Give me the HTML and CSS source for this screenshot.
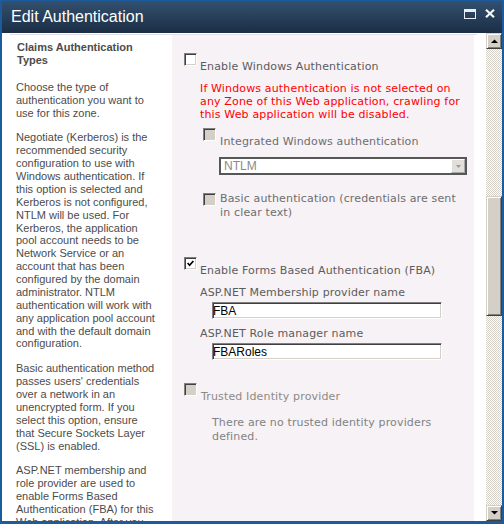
FILE: index.html
```html
<!DOCTYPE html>
<html lang="en">
<head>
<meta charset="utf-8">
<title>Edit Authentication</title>
<link rel="stylesheet" href="styles.css">
</head>
<body>
<div class="window">
  <div class="titlebar">
    <span class="title">Edit Authentication</span>
    <span class="tb-icons">
      <svg class="ic-max" width="12" height="10" viewBox="0 0 12 10"><rect x="0.5" y="0.5" width="11" height="9" fill="none" stroke="#e8eef4"/><rect x="0" y="0" width="12" height="3" fill="#e8eef4"/></svg>
      <svg class="ic-close" width="10" height="9" viewBox="0 0 10 9"><path d="M1 0.8 L9 8.2 M9 0.8 L1 8.2" stroke="#f4f6f8" stroke-width="2.2" fill="none"/></svg>
    </span>
  </div>
  <div class="body">
    <div class="viewport">
      <div class="section">
        <div class="desc">
          <h3>Claims Authentication Types</h3>
          <p>Choose the type of authentication you want to use for this zone.</p>
          <p>Negotiate (Kerberos) is the recommended security configuration to use with Windows authentication. If this option is selected and Kerberos is not configured, NTLM will be used. For Kerberos, the application pool account needs to be Network Service or an account that has been configured by the domain administrator. NTLM authentication will work with any application pool account and with the default domain configuration.</p>
          <p>Basic authentication method passes users' credentials over a network in an unencrypted form. If you select this option, ensure that Secure Sockets Layer (SSL) is enabled.</p>
          <p>ASP.NET membership and role provider are used to enable Forms Based Authentication (FBA) for this Web application. After you select this option, make sure that the provider names are configured in the web.config file.</p>
        </div>
        <div class="controls">
          <div class="cb-row">
            <span class="cb"></span>
            <span class="cb-label">Enable Windows Authentication</span>
          </div>
          <p class="warn">If Windows authentication is not selected on any Zone of this Web application, crawling for this Web application will be disabled.</p>
          <div class="sub">
            <div class="cb-row sub-int">
              <span class="cb disabled"></span>
              <span class="cb-label dim">Integrated Windows authentication</span>
            </div>
            <div class="select">
              <span class="sel-text">NTLM</span>
              <span class="sel-btn"><svg width="5" height="3" viewBox="0 0 5 3"><path d="M0 0 H5 L2.5 3 Z" fill="#9a9a9a"/></svg></span>
            </div>
            <div class="cb-row sub-basic">
              <span class="cb disabled"></span>
              <span class="cb-label dim wrap">Basic authentication (credentials are sent in clear text)</span>
            </div>
          </div>
          <div class="cb-row fba">
            <span class="cb"><svg width="7" height="7" viewBox="0 0 7 7"><path d="M0.6 3 L2.6 5.2 L6.4 1" fill="none" stroke="#000" stroke-width="1.7"/></svg></span>
            <span class="cb-label">Enable Forms Based Authentication (FBA)</span>
          </div>
          <div class="field-label">ASP.NET Membership provider name</div>
          <input class="tb" type="text" value="FBA">
          <div class="field-label second">ASP.NET Role manager name</div>
          <input class="tb" type="text" value="FBARoles">
          <div class="cb-row trusted">
            <span class="cb disabled"></span>
            <span class="cb-label faint">Trusted Identity provider</span>
          </div>
          <p class="note">There are no trusted identity providers defined.</p>
        </div>
      </div>
    </div>
    <div class="scrollbar">
      <div class="sb-btn"><svg width="7" height="4" viewBox="0 0 7 4"><path d="M0 4 H7 L3.5 0.5 Z" fill="#000"/></svg></div>
      <div class="sb-track"><div class="sb-thumb"></div></div>
      <div class="sb-btn"><svg width="7" height="4" viewBox="0 0 7 4"><path d="M0 0 H7 L3.5 3.5 Z" fill="#000"/></svg></div>
    </div>
  </div>
</div>
</body>
</html>
```
FILE: styles.css
```css
* { box-sizing: border-box; }
html, body { margin: 0; padding: 0; }
body { width: 504px; height: 524px; overflow: hidden; background: #fff; }

.window {
  width: 504px;
  height: 524px;
  border: 2px solid #1a5c9e;
  border-top-width: 1px;
  border-bottom-width: 3px;
  display: flex;
  flex-direction: column;
}

.titlebar {
  height: 32px;
  flex: none;
  background: linear-gradient(#33506f, #1b2e45);
  display: flex;
  align-items: center;
  padding: 0 7px 0 9px;
}
.title {
  font: 16px "Liberation Sans", Arial, sans-serif;
  color: #fff;
}
.tb-icons {
  margin-left: auto;
  align-self: flex-start;
  margin-top: 8px;
  display: flex;
  gap: 9px;
}
.tb-icons svg { display: block; }

.body { flex: 1; display: flex; min-height: 0; }
.viewport {
  flex: 1;
  overflow: hidden;
  padding: 1px 9px 0 8px;
}
.section {
  display: flex;
  width: 467px;
  border-top: 1px solid #e3dee3;
}

.desc {
  width: 162px;
  flex: none;
  padding: 6px 16px 0 6px;
  font: 11px/12.875px "Liberation Sans", Arial, sans-serif;
  color: #4c4c4c;
}
.desc h3 {
  margin: 0;
  padding-left: 1px;
  font-size: 11px;
  font-weight: bold;
}
.desc p { margin: 12px 0 0; }
.desc h3 + p { margin-top: 14px; }

.controls {
  width: 302px;
  flex: none;
  background: #f6f2f6;
  padding: 18px 8px 0 12px;
  font: 11px/13px "DejaVu Sans", Verdana, sans-serif;
  letter-spacing: 0.15px;
  color: #5c5c5c;
}
.controls p { margin: 0; }

.cb-row { display: flex; align-items: flex-start; }
.cb {
  width: 13px;
  height: 13px;
  flex: none;
  background: #fff;
  border: 1px solid;
  border-color: #808080 #fff #fff #808080;
  box-shadow: inset 1px 1px #404040, inset -1px -1px #d4d0c8;
  display: flex;
  align-items: center;
  justify-content: center;
}
.cb svg { display: block; }
.cb.disabled { background: #d4d0c8; }
.cb-label { margin: 7px 0 0 3px; }
.dim { color: #6e6e6e; }
.faint { color: #8e8a84; }

.warn {
  margin: 9px 0 0 16px !important;
  width: 268px;
  color: #f00;
}

.sub { margin-left: 19px; }
.sub .cb-label { margin-left: 4px; }
.sub-int { margin-top: 7px; }
.sub-basic { margin-top: 18px; }
.sub-basic .cb-label { margin-top: -1px; line-height: 14px; }

.select {
  margin: 9px 0 0 16px;
  width: 248px;
  height: 18px;
  border: 2px solid #575757;
  background: #fff;
  display: flex;
  align-items: center;
  padding-left: 3px;
  font: 12px "Liberation Sans", Arial, sans-serif;
  letter-spacing: 0;
  color: #8a8a8a;
}
.sel-btn {
  margin-left: auto;
  width: 14px;
  height: 14px;
  background: #e2dfda;
  border: 1px solid;
  border-color: #fff #a8a8a8 #a8a8a8 #fff;
  display: flex;
  align-items: center;
  justify-content: center;
}
.sel-btn svg { display: block; }

.fba { margin-top: 37px; }
.field-label { margin: 9px 0 0 16px; }
.field-label.second { margin-top: 8px; }
.tb {
  display: block;
  margin: 3px 0 0 28px;
  width: 230px;
  height: 17px;
  padding: 0;
  font: 12px "Liberation Sans", Arial, sans-serif;
  color: #000;
  background: #fff;
  border: 1px solid;
  border-color: #808080 #fff #fff #808080;
  box-shadow: inset 1px 1px #404040, inset -1px -1px #d4d0c8;
  outline: none;
}

.trusted { margin-top: 23px; }
.trusted .cb-label { margin-left: 4px; }
.note {
  margin: 13px 0 0 28px !important;
  line-height: 14px;
  color: #828282;
}

.scrollbar {
  width: 16px;
  flex: none;
  display: flex;
  flex-direction: column;
}
.sb-btn {
  height: 16px;
  flex: none;
  background: #d4d0c8;
  border: 1px solid;
  border-color: #d4d0c8 #404040 #404040 #d4d0c8;
  box-shadow: inset 1px 1px #fff, inset -1px -1px #808080;
  display: flex;
  align-items: center;
  justify-content: center;
}
.sb-btn svg { display: block; }
.sb-track {
  flex: 1;
  background: repeating-conic-gradient(#d4d0c8 0 25%, #fff 0 50%) 0 0 / 2px 2px;
}
.sb-thumb {
  margin-top: 147px;
  height: 120px;
  background: #d4d0c8;
  border: 1px solid;
  border-color: #d4d0c8 #404040 #404040 #d4d0c8;
  box-shadow: inset 1px 1px #fff, inset -1px -1px #808080;
}
```
